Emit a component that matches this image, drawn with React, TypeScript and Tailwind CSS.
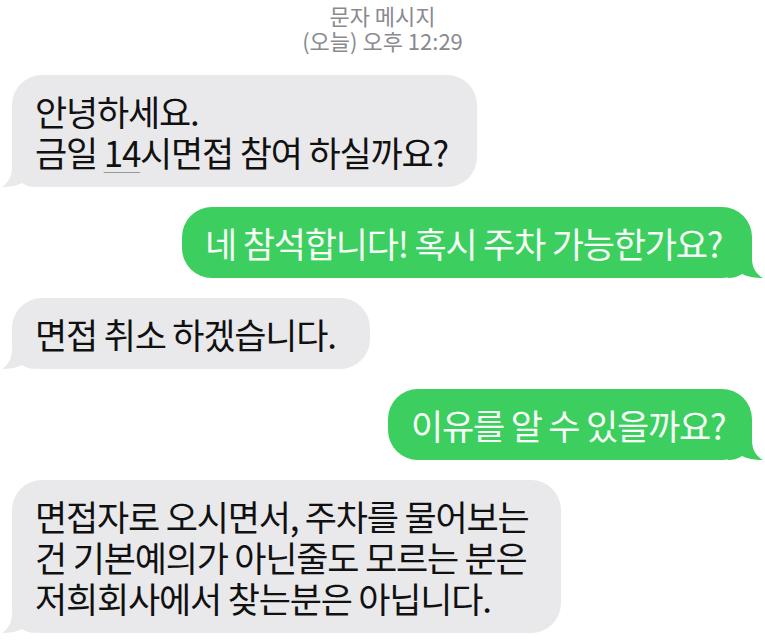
import React from 'react'

const font = { fontFamily: '"Noto Sans CJK KR", "Noto Sans", sans-serif' }

const LeftTail = () => (
  <svg className="absolute left-[-10px] bottom-0" width="34" height="36" viewBox="0 0 34 36">
    <path d="M10 0 H34 V36 C28 36 24 34.5 20 32 C15 34.5 8 36 0 36 C6 32 10 26 10 16 Z" fill="#e9e9eb" />
  </svg>
)

const RightTail = () => (
  <svg className="absolute right-[-11px] bottom-0" width="35" height="36" viewBox="0 0 35 36">
    <path d="M24 0 H0 V36 C6 36 10 34.5 14 32 C19 34.5 26 36 35 36 C28 32 24 26 24 16 Z" fill="#3ccf5f" />
  </svg>
)

const Received = ({ width, children }: { width: string; children: React.ReactNode }) => (
  <div className={`relative ml-[12px] self-start ${width}`}>
    <LeftTail />
    <div className="relative rounded-[30px] bg-[#e9e9eb] py-[15px] pl-[23px] pr-[10px] text-[35px] leading-[41px] tracking-[-1.2px] text-[#111] whitespace-nowrap">
      {children}
    </div>
  </div>
)

const Sent = ({ width, children }: { width: string; children: React.ReactNode }) => (
  <div className={`relative mr-[13px] self-end ${width}`}>
    <RightTail />
    <div className="relative rounded-[30px] bg-[#3ccf5f] py-[15px] pl-[23px] pr-[10px] text-[35px] leading-[41px] tracking-[-1.2px] text-[#f7fff8] whitespace-nowrap">
      {children}
    </div>
  </div>
)

export default function App() {
  return (
    <div className="w-[765px] h-[644px] overflow-hidden bg-white flex flex-col" style={font}>
      {/* Header */}
      <div className="pt-[3px] text-center text-[22px] leading-[25px] text-[#8a8a8e]">
        <div>문자 메시지</div>
        <div>(오늘) 오후 12:29</div>
      </div>

      {/* Messages */}
      <div className="mt-[22px] flex flex-col gap-[20px]">
        <Received width="w-[465px]">
          안녕하세요.
          <br />
          금일{' '}
          <span className="underline decoration-[#9a9a9a] decoration-1 underline-offset-[5px]">14</span>
          시면접 참여 하실까요?
        </Received>

        <Sent width="w-[570px]">네 참석합니다! 혹시 주차 가능한가요?</Sent>

        <Received width="w-[358px]">면접 취소 하겠습니다.</Received>

        <Sent width="w-[364px]">이유를 알 수 있을까요?</Sent>

        <Received width="w-[549px]">
          면접자로 오시면서, 주차를 물어보는
          <br />
          건 기본예의가 아닌줄도 모르는 분은
          <br />
          저희회사에서 찾는분은 아닙니다.
        </Received>
      </div>
    </div>
  )
}
